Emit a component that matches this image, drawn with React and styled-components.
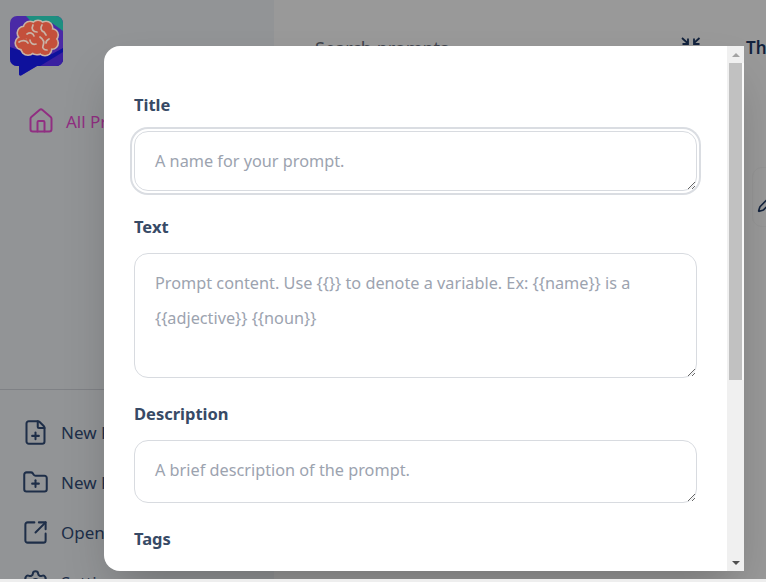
import React from "react";
import styled, { createGlobalStyle } from "styled-components";
import { House, FilePlus, FolderPlus, SquareArrowOutUpRight, Settings, Pen } from "lucide-react";

const Global = createGlobalStyle`
  html, body { margin: 0; padding: 0; background: #eeeeee; }
  #root { width: 766px; height: 582px; }
`;

const Page = styled.div`
  position: relative;
  width: 766px;
  height: 579px;
  overflow: hidden;
  display: flex;
  background: #ffffff;
  font-family: "Noto Sans", "Open Sans", sans-serif;
  color: #334155;
`;

const Sidebar = styled.aside`
  width: 274px;
  flex: none;
  display: flex;
  flex-direction: column;
  background: #f4f7fb;
`;

const Logo = styled.svg`
  display: block;
  position: relative;
  z-index: 1;
  margin: 15px 0 0 9px;
  filter: blur(0.5px);
`;

const NavTop = styled.nav`
  flex: 1;
  padding: 29px 0 0 27px;
`;

const NavBottom = styled.nav`
  border-top: 1px solid #d4d8de;
  height: 190px;
  padding: 29px 0 0 22px;
  box-sizing: border-box;
  overflow: hidden;
  display: flex;
  flex-direction: column;
  gap: 24px;
`;

const NavItem = styled.div`
  display: flex;
  align-items: center;
  height: 26px;
  font-size: 17px;
  white-space: nowrap;
  color: ${p => (p.$accent ? "#f04ed8" : "#334e78")};
`;

const NavIcon = styled.span`
  width: ${p => p.$w || 39}px;
  flex: none;
  display: flex;
`;

const Main = styled.main`
  flex: 1;
  min-width: 0;
  display: flex;
  flex-direction: column;
  padding: 37px 0 0 41px;
  box-sizing: border-box;
  white-space: nowrap;
`;

const TopRow = styled.div`
  display: flex;
  align-items: flex-start;
  height: 22px;
`;

const SearchText = styled.span`
  width: 366px;
  flex: none;
  font-size: 18px;
  line-height: 22px;
  color: #6b7280;
`;

const CompressIcon = styled.svg`
  flex: none;
  margin-right: 45px;
  color: #1e3a66;
`;

const HeadText = styled.span`
  font-size: 17px;
  font-weight: 600;
  line-height: 22px;
  color: #1e3a66;
`;

const Card = styled.div`
  flex: none;
  align-self: flex-start;
  margin: 108px 0 0 437px;
  width: 60px;
  height: 60px;
  border: 1px solid #f8f8f8;
  border-radius: 10px;
  padding: 25px 0 0 4px;
  box-sizing: border-box;
  color: #1e3a66;
`;

const Backdrop = styled.div`
  position: absolute;
  inset: 0;
  z-index: 0;
  background: rgba(0, 0, 0, 0.4);
`;

const Dialog = styled.div`
  position: absolute;
  z-index: 2;
  left: 104px;
  top: 46px;
  width: 640px;
  height: 525px;
  display: flex;
  background: #ffffff;
  border-radius: 16px 0 0 16px;
  overflow: hidden;
`;

const DialogShadow = styled.div`
  position: absolute;
  z-index: 1;
  left: 104px;
  top: 46px;
  width: 640px;
  height: 525px;
  border-radius: 16px 0 0 16px;
  box-shadow: 0 25px 50px -12px rgba(0, 0, 0, 0.25);
`;

const Form = styled.form`
  flex: 1;
  min-width: 0;
  padding: 47px 30px 0 30px;
  box-sizing: border-box;
`;

const Label = styled.label`
  display: block;
  font-size: 16.5px;
  font-weight: 700;
  line-height: 24px;
  color: #374a66;
  margin-bottom: 14px;
`;

const Field = styled.textarea`
  display: block;
  width: 100%;
  height: ${p => p.$h}px;
  margin-bottom: 24px;
  padding: 12px 20px 10px;
  box-sizing: border-box;
  border: 1px solid #d8dbe0;
  border-radius: 14px;
  background: #ffffff;
  outline: none;
  font-family: inherit;
  font-size: 16.25px;
  line-height: 35px;
  box-shadow: ${p => (p.$focus ? "0 0 0 2px #fff, 0 0 0 4px #dadde2" : "none")};
  &::placeholder { color: #9ca3af; opacity: 1; }
`;

const Scrollbar = styled.div`
  width: 17px;
  flex: none;
  display: flex;
  flex-direction: column;
  background: #f0f0f0;
`;

const Arrow = styled.div`
  height: 17px;
  flex: none;
  display: flex;
  align-items: center;
  justify-content: center;
  &::before {
    content: "";
    border-left: 4px solid transparent;
    border-right: 4px solid transparent;
    ${p => (p.$down ? "border-top: 4px solid #505050;" : "border-bottom: 4px solid #a3a3a3;")}
  }
`;

const Thumb = styled.div`
  margin-left: 2px;
  height: 317px;
  flex: none;
  background: #c1c1c1;
  border-right: 2px solid #fafafa;
`;

const TrackFill = styled.div`
  flex: 1;
`;

const lobes = [
  [24, 33, 6], [22, 43, 6], [30, 28, 6], [38, 27, 6], [46, 28, 6], [52, 35, 5.5],
  [52, 43, 5.5], [45, 49, 6], [37, 47, 7], [28, 48, 6.5], [36, 36, 10], [44, 39, 8],
];

const Brain = () => (
  <Logo width="56" height="64" viewBox="9 15 56 64">
    <path d="M17 16h39a7 7 0 0 1 7 7v36a7 7 0 0 1-7 7H37L21 75.500a1.500 1.500 0 0 1-2-1.500V66h-2a7 7 0 0 1-7-7V23a7 7 0 0 1 7-7z" fill="#4a2aa6" />
    <path d="M26 16h30a7 7 0 0 1 7 7v8L52 23 36 27z" fill="#1d8f80" />
    <path d="M10 47l14 5 14 4 14-2 11-6v11a7 7 0 0 1-7 7H37L21 75.500a1.500 1.500 0 0 1-2-1.500V66h-2a7 7 0 0 1-7-7z" fill="#0e119c" />
    <path d="M40 66l23-14v7a7 7 0 0 1-7 7z" fill="#3a20a0" />
    {lobes.map(([x, y, r]) => <circle key={`o${x}${y}`} cx={x} cy={y} r={r + 1.6} fill="#c9b3a6" />)}
    {lobes.map(([x, y, r]) => <circle key={`f${x}${y}`} cx={x} cy={y} r={r} fill="#c4503b" />)}
    <path d="M33 25c-2 4 0 7 4 7M27 34c3-2 6-1 7 2M42 25c-2 3-1 6 2 7l2 3M19 42c3-2 7-2 9 1M30 40c0 3 3 5 6 4M40 37c3 2 5 5 3 9-1 2 1 4 4 4M49 39c-2 1-3 2-3 4" fill="none" stroke="#c9b3a6" strokeWidth="1.7" strokeLinecap="round" />
  </Logo>
);

const Compress = () => (
  <CompressIcon width="20" height="20" viewBox="0 0 20 20" fill="none" stroke="currentColor" strokeWidth="1.8">
    <path d="M1 1l5.500 5M7 1.500v5.500H1.500M18.500 1l-5.500 5M13 1.500v5.500h5.500" />
    <path d="M1 19l5.500-5M7 18.500v-5.500H1.500M18.500 19l-5.500-5M13 18.500v-5.500h5.500" />
  </CompressIcon>
);

export default function App() {
  return (
    <>
      <Global />
      <Page>
        <Sidebar>
          <Brain />
          <NavTop>
            <NavItem $accent>
              <NavIcon $w={39}><House size={28} strokeWidth={1.7} /></NavIcon>
              All Prompts
            </NavItem>
          </NavTop>
          <NavBottom>
            <NavItem><NavIcon><FilePlus size={27} strokeWidth={1.8} /></NavIcon>New Prompt</NavItem>
            <NavItem><NavIcon><FolderPlus size={27} strokeWidth={1.8} /></NavIcon>New Folder</NavItem>
            <NavItem><NavIcon><SquareArrowOutUpRight size={27} strokeWidth={1.8} /></NavIcon>Open</NavItem>
            <NavItem><NavIcon><Settings size={27} strokeWidth={1.8} /></NavIcon>Settings</NavItem>
          </NavBottom>
        </Sidebar>
        <Main>
          <TopRow>
            <SearchText>Search prompts</SearchText>
            <Compress />
            <HeadText>Theme</HeadText>
          </TopRow>
          <Card><Pen size={20} strokeWidth={2} /></Card>
        </Main>
        <Backdrop />
        <DialogShadow />
        <Dialog>
          <Form>
            <Label htmlFor="t">Title</Label>
            <Field id="t" $focus $h={60} placeholder="A name for your prompt." />
            <Label htmlFor="x">Text</Label>
            <Field id="x" $h={125} placeholder="Prompt content. Use {{}} to denote a variable. Ex: {{name}} is a {{adjective}} {{noun}}" />
            <Label htmlFor="d">Description</Label>
            <Field id="d" $h={63} placeholder="A brief description of the prompt." />
            <Label>Tags</Label>
          </Form>
          <Scrollbar>
            <Arrow />
            <Thumb />
            <TrackFill />
            <Arrow $down />
          </Scrollbar>
        </Dialog>
      </Page>
    </>
  );
}
